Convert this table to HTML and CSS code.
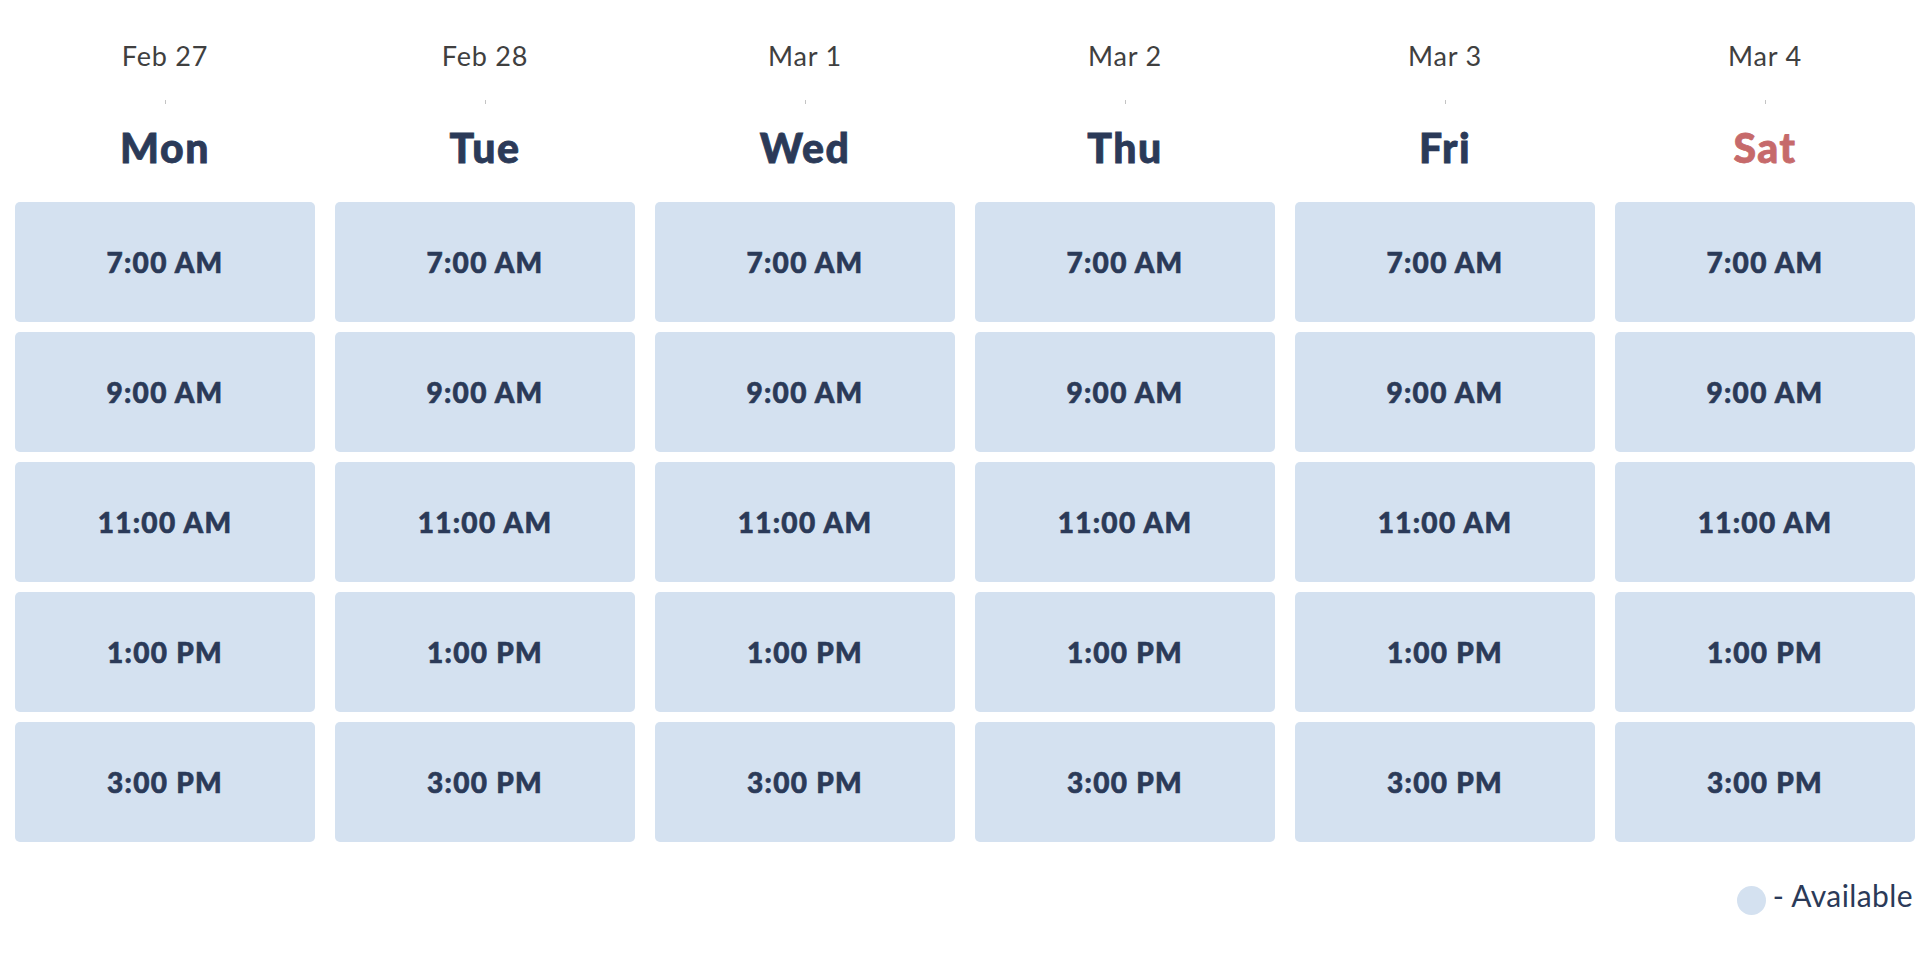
FILE: index.html
```html
<!DOCTYPE html>
<html lang="en">
<head>
  <meta charset="UTF-8" />
  <meta name="viewport" content="width=device-width, initial-scale=1.0"/>
  <title>Availability</title>
  <link rel="stylesheet" href="styles.css">
</head>
<body>
  <div id="schedule"></div>

  <div class="legend">
    <span class="legend-dot"></span>
    <span class="legend-text">- Available</span>
  </div>

  <script>
    const schedule = document.getElementById("schedule");

    const days = [
      { date: "Feb 27", name: "Mon" },
      { date: "Feb 28", name: "Tue" },
      { date: "Mar 1", name: "Wed" },
      { date: "Mar 2", name: "Thu" },
      { date: "Mar 3", name: "Fri" },
      { date: "Mar 4", name: "Sat", weekend: true }
    ];
    const times = ["7:00 AM", "9:00 AM", "11:00 AM", "1:00 PM", "3:00 PM"];

    days.forEach(day => {
      const col = document.createElement("div");
      col.classList.add("day");

      const date = document.createElement("div");
      date.classList.add("date");
      date.textContent = day.date;
      col.appendChild(date);

      const tick = document.createElement("div");
      tick.classList.add("tick");
      col.appendChild(tick);

      const name = document.createElement("div");
      name.classList.add("day-name");
      if (day.weekend) name.classList.add("weekend");
      name.textContent = day.name;
      col.appendChild(name);

      times.forEach(time => {
        const slot = document.createElement("div");
        slot.classList.add("slot");
        slot.textContent = time;
        col.appendChild(slot);
      });

      schedule.appendChild(col);
    });
  </script>
</body>
</html>
```

FILE: styles.css
```css
body {
  font-family: Lato, "Open Sans", sans-serif;
  background: #fff;
  margin: 0;
  padding: 0 0 0 15px;
  overflow: hidden;
}

#schedule {
  display: grid;
  grid-template-columns: repeat(6, 300px);
  column-gap: 20px;
}

.day {
  display: flex;
  flex-direction: column;
  align-items: center;
}

.date {
  margin-top: 40px;
  height: 32px;
  line-height: 32px;
  font-size: 27px;
  letter-spacing: 0.8px;
  color: #404040;
}

.tick {
  margin-top: 28px;
  width: 1px;
  height: 4px;
  background: #c4c4c4;
}

.day-name {
  margin-top: 20px;
  height: 48px;
  line-height: 48px;
  font-size: 41px;
  font-weight: 900;
  letter-spacing: 1.5px;
  -webkit-text-stroke: 0.8px currentColor;
  color: #2b3a58;
}

.weekend {
  color: #c66a6b;
}

.day-name + .slot {
  margin-top: 30px;
}

.slot {
  width: 300px;
  height: 120px;
  margin-bottom: 10px;
  background-color: #d4e1f0;
  border-radius: 5px;
  display: flex;
  justify-content: center;
  align-items: center;
  font-size: 28px;
  font-weight: 900;
  letter-spacing: 1.3px;
  -webkit-text-stroke: 0.6px #2b3a58;
  color: #2b3a58;
}

.legend {
  display: flex;
  justify-content: flex-end;
  align-items: flex-start;
  gap: 7px;
  margin-top: 26px;
  padding-right: 2px;
}

.legend-dot {
  margin-top: 8px;
  width: 29px;
  height: 29px;
  border-radius: 50%;
  background: #d4e1f0;
}

.legend-text {
  font-size: 30px;
  line-height: 34px;
  letter-spacing: 0.4px;
  color: #2b3a58;
}
```
